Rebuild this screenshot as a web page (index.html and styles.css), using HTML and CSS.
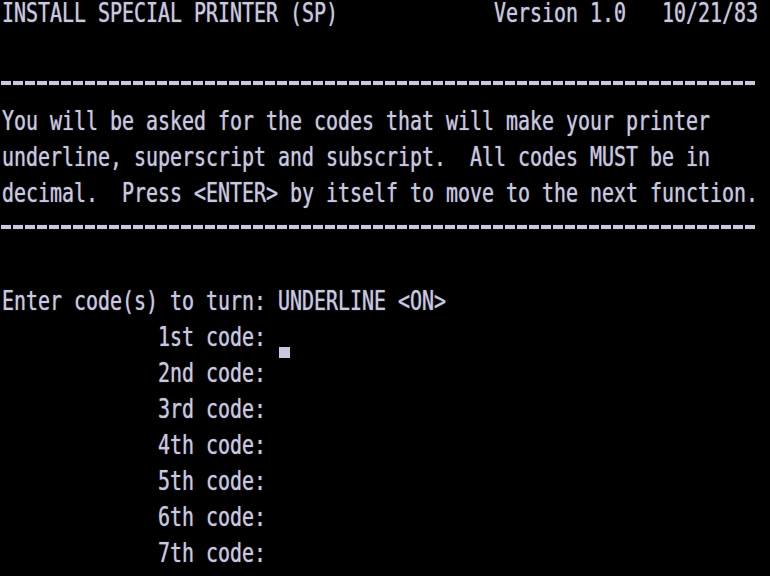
FILE: index.html
```html
<!DOCTYPE html>
<html>
<head>
<meta charset="utf-8">
<link rel="stylesheet" href="styles.css">
</head>
<body>
<div class="screen">
  <div class="row"><span class="t">INSTALL SPECIAL PRINTER (SP)             Version 1.0   10/21/83</span></div>
  <div class="row"></div>
  <div class="row rule"><div class="dash"></div></div>
  <div class="row"><span class="t">You will be asked for the codes that will make your printer</span></div>
  <div class="row"><span class="t">underline, superscript and subscript.  All codes MUST be in</span></div>
  <div class="row"><span class="t">decimal.  Press &lt;ENTER&gt; by itself to move to the next function.</span></div>
  <div class="row rule"><div class="dash"></div></div>
  <div class="row"></div>
  <div class="row"><span class="t">Enter code(s) to turn: UNDERLINE &lt;ON&gt;</span></div>
  <div class="row"><span class="t">             1st code:</span></div>
  <div class="row"><span class="t">             2nd code:</span></div>
  <div class="row"><span class="t">             3rd code:</span></div>
  <div class="row"><span class="t">             4th code:</span></div>
  <div class="row"><span class="t">             5th code:</span></div>
  <div class="row"><span class="t">             6th code:</span></div>
  <div class="row"><span class="t">             7th code:</span></div>
  <div class="cursor"></div>
</div>
</body>
</html>
```
FILE: styles.css
```css
html, body {
  margin: 0;
  padding: 0;
  background: #000;
  overflow: hidden;
}
.screen {
  position: relative;
  width: 770px;
  height: 576px;
  background: #000;
  color: #c8c8e0;
  font-family: "DejaVu Sans Mono", monospace;
}
.row {
  height: 36px;
  display: flex;
  align-items: flex-start;
}
.t {
  display: inline-block;
  white-space: pre;
  font-size: 20px;
  line-height: 20px;
  letter-spacing: -0.04px;
  padding-left: 2px;
  transform: scaleY(1.3);
  transform-origin: 0 0;
  text-shadow: 0 0 1px rgba(200, 200, 224, 0.7);
}
.dash {
  margin-top: 9px;
  margin-left: 1px;
  width: 756px;
  height: 4px;
  background: repeating-linear-gradient(90deg, #c8c8e0 0 10px, transparent 10px 12px);
  box-shadow: 0 0 1px rgba(200, 200, 224, 0.5);
}
.cursor {
  position: absolute;
  left: 279px;
  top: 347px;
  width: 11px;
  height: 11px;
  background: #c8c8e0;
}
```
